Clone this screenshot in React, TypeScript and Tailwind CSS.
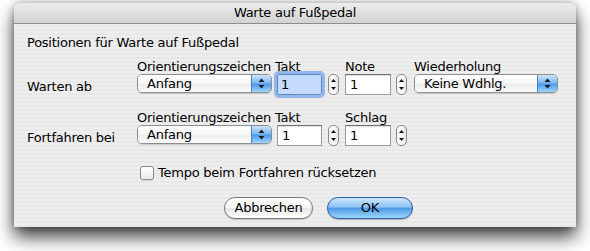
import React from "react";

const font = "font-['DejaVu_Sans',sans-serif] text-[13px] tracking-[-0.25px] text-black";

function PopupArrows() {
  return (
    <svg width="7" height="11" viewBox="0 0 7 11">
      <path d="M3.5 0.5 L6.5 4 L0.5 4 Z" fill="#1a1a1a" />
      <path d="M3.5 10.5 L6.5 7 L0.5 7 Z" fill="#1a1a1a" />
    </svg>
  );
}

function Popup({ text, w }: { text: string; w: string }) {
  return (
    <div
      className={`${w} h-[19px] flex rounded-[5px] border border-[#8e8e8e] overflow-hidden shadow-[0_1px_1px_rgba(0,0,0,0.15)]`}
    >
      <div className="flex-1 bg-[linear-gradient(to_bottom,#ffffff_0%,#f6f6f6_50%,#ebebeb_51%,#fbfbfb_100%)] pl-[9px] leading-[17px]">
        {text}
      </div>
      <div className="w-[20px] flex items-center justify-center border-l border-[#4a7fc0] bg-[linear-gradient(to_bottom,#cde4fb_0%,#7fb8f0_45%,#4c9bea_55%,#9fd6ff_100%)]">
        <PopupArrows />
      </div>
    </div>
  );
}

function Field({ value, focus }: { value: string; focus?: boolean }) {
  if (focus) {
    return (
      <div className="w-[45px] h-[21px] rounded-[2px] shadow-[0_0_0_3px_#93b7e8] border border-[#5d86c4]">
        <div className="h-full bg-[#c4dbff] pl-[3px] leading-[19px]">{value}</div>
      </div>
    );
  }
  return (
    <div className="w-[46px] h-[21px] bg-white border border-[#9a9a9a] border-t-[#6f6f6f] pl-[4px] leading-[19px] shadow-[inset_0_1px_1px_rgba(0,0,0,0.12)]">
      {value}
    </div>
  );
}

function Stepper() {
  return (
    <div className="w-[11px] h-[21px] rounded-[5px] border border-[#8a8a8a] bg-[linear-gradient(to_right,#f3f3f3,#ffffff,#e4e4e4)] flex flex-col items-center justify-center gap-[5px]">
      <svg width="5" height="3" viewBox="0 0 5 3">
        <path d="M2.5 0 L5 3 L0 3 Z" fill="#111" />
      </svg>
      <svg width="5" height="3" viewBox="0 0 5 3">
        <path d="M2.5 3 L5 0 L0 0 Z" fill="#111" />
      </svg>
    </div>
  );
}

function Col({ label, children, lshift }: { label: string; children: React.ReactNode; lshift?: string }) {
  return (
    <div className="flex flex-col">
      <div className={`h-[15px] leading-[15px] whitespace-nowrap ${lshift ?? ""}`}>{label}</div>
      {children}
    </div>
  );
}

export default function App() {
  return (
    <div className={`w-[590px] h-[251px] bg-white overflow-hidden ${font}`}>
      <div className="ml-[14px] mt-[3px] w-[562px] h-[224px] rounded-t-[6px] flex flex-col overflow-hidden shadow-[0_10px_18px_rgba(0,0,0,0.75),0_0_7px_rgba(0,0,0,0.3)] bg-[repeating-linear-gradient(to_bottom,#eeeeee_0px,#eeeeee_2px,#e8e8e8_2px,#e8e8e8_4px)]">
        <div className="h-[21px] shrink-0 flex items-center justify-center border-b border-[#8c8c8c] bg-[linear-gradient(to_bottom,#ececec,#d2d2d2)] leading-[20px]">
          Warte auf Fußpedal
        </div>
        <div className="pl-[13px] flex flex-col">
          <div className="mt-[11px] h-[16px] leading-[16px]">Positionen für Warte auf Fußpedal</div>

          <div className="mt-[8px] flex items-start">
            <div className="w-[110px] pt-[20px] leading-[16px]">Warten ab</div>
            <Col label="Orientierungszeichen">
              <Popup text="Anfang" w="w-[135px]" />
            </Col>
            <div className="ml-[5px]">
              <Col label="Takt" lshift="-ml-[2px]">
                <Field value="1" focus />
              </Col>
            </div>
            <div className="ml-[6px] pt-[15px]">
              <Stepper />
            </div>
            <div className="ml-[6px]">
              <Col label="Note">
                <Field value="1" />
              </Col>
            </div>
            <div className="ml-[5px] pt-[15px]">
              <Stepper />
            </div>
            <div className="ml-[7px]">
              <Col label="Wiederholung">
                <Popup text="Keine Wdhlg." w="w-[144px]" />
              </Col>
            </div>
          </div>

          <div className="mt-[15px] flex items-start">
            <div className="w-[110px] pt-[20px] leading-[16px]">Fortfahren bei</div>
            <Col label="Orientierungszeichen">
              <Popup text="Anfang" w="w-[135px]" />
            </Col>
            <div className="ml-[5px]">
              <Col label="Takt" lshift="-ml-[2px]">
                <div className="w-[45px] h-[21px] bg-white border border-[#9a9a9a] border-t-[#6f6f6f] pl-[4px] leading-[19px] shadow-[inset_0_1px_1px_rgba(0,0,0,0.12)]">
                  1
                </div>
              </Col>
            </div>
            <div className="ml-[6px] pt-[15px]">
              <Stepper />
            </div>
            <div className="ml-[6px]">
              <Col label="Schlag">
                <Field value="1" />
              </Col>
            </div>
            <div className="ml-[5px] pt-[15px]">
              <Stepper />
            </div>
          </div>

          <div className="mt-[19px] ml-[113px] flex items-center gap-[4px] h-[16px]">
            <div className="w-[14px] h-[14px] rounded-[3px] border border-[#8a8a8a] bg-[linear-gradient(to_bottom,#ffffff,#ececec)] shadow-[0_1px_1px_rgba(0,0,0,0.1)]" />
            <span className="leading-[16px]">Tempo beim Fortfahren rücksetzen</span>
          </div>

          <div className="mt-[16px] ml-[197px] flex gap-[14px]">
            <div className="w-[89px] h-[22px] rounded-full border border-[#7a7a7a] bg-[linear-gradient(to_bottom,#ffffff_0%,#f4f4f4_50%,#e6e6e6_52%,#ffffff_100%)] flex items-center justify-center leading-[20px] shadow-[0_1px_1px_rgba(0,0,0,0.2)]">
              Abbrechen
            </div>
            <div className="w-[86px] h-[22px] rounded-full border border-[#2b5da8] bg-[linear-gradient(to_bottom,#cfe6fb_0%,#8ec3f4_45%,#4f9ae6_52%,#9fd6ff_100%)] flex items-center justify-center leading-[20px] shadow-[0_1px_1px_rgba(0,0,0,0.25)]">
              OK
            </div>
          </div>
        </div>
      </div>
    </div>
  );
}
